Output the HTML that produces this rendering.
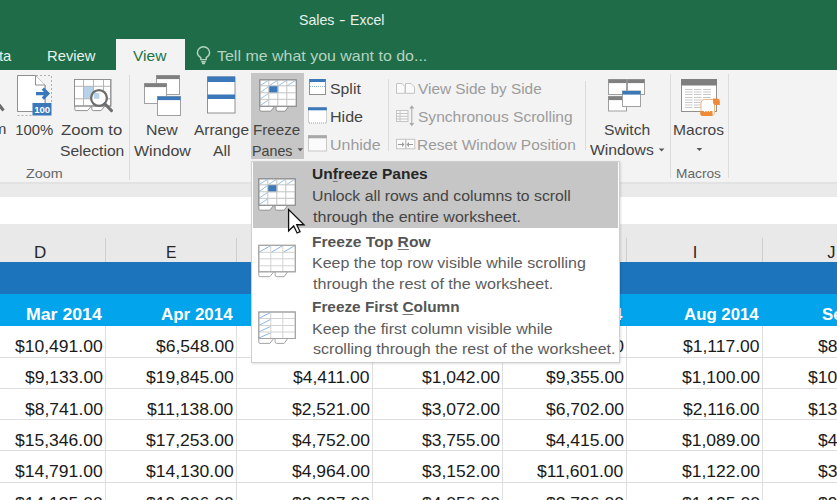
<!DOCTYPE html>
<html><head><meta charset="utf-8"><style>
html,body{margin:0;padding:0;overflow:hidden;}
body{width:837px;height:500px;overflow:hidden;position:relative;background:#fff;font-family:"Liberation Sans",sans-serif;}
.t{position:absolute;white-space:nowrap;line-height:1;}
.r{position:absolute;}
u{text-decoration:underline;text-decoration-thickness:1px;text-underline-offset:1.5px;text-decoration-color:#777;}
svg{position:absolute;overflow:visible;}
</style></head><body>
<div class="r" style="left:0px;top:0px;width:837px;height:70px;background:#1e6d48;"></div>
<div class="r" style="left:116px;top:39px;width:69px;height:31px;background:#f3f3f3;"></div>
<div class="r" style="left:0px;top:70px;width:837px;height:112px;background:#f3f3f3;"></div>
<div class="r" style="left:0px;top:182px;width:837px;height:14.5px;background:#eaeaea;"></div>
<div class="r" style="left:0px;top:182px;width:837px;height:1.5px;background:#e2e2e2;"></div>
<div class="r" style="left:0px;top:196.5px;width:837px;height:27.3px;background:#ffffff;"></div>
<div class="r" style="left:0px;top:223.8px;width:837px;height:38.4px;background:#e9e9e9;"></div>
<div class="r" style="left:0px;top:262px;width:837px;height:32px;background:#1c74bc;"></div>
<div class="r" style="left:0px;top:294px;width:837px;height:31.5px;background:#02a4ec;"></div>
<div class="r" style="left:0px;top:325.5px;width:837px;height:174.5px;background:#ffffff;"></div>
<div class="r" style="left:0px;top:356.5px;width:837px;height:1px;background:#dedede;"></div>
<div class="r" style="left:0px;top:387.8px;width:837px;height:1px;background:#dedede;"></div>
<div class="r" style="left:0px;top:419.1px;width:837px;height:1px;background:#dedede;"></div>
<div class="r" style="left:0px;top:450.4px;width:837px;height:1px;background:#dedede;"></div>
<div class="r" style="left:0px;top:481.7px;width:837px;height:1px;background:#dedede;"></div>
<div class="r" style="left:105px;top:325.5px;width:1px;height:174.5px;background:#dedede;"></div>
<div class="r" style="left:105px;top:238px;width:1px;height:24px;background:#d0d0d0;"></div>
<div class="r" style="left:236px;top:325.5px;width:1px;height:174.5px;background:#dedede;"></div>
<div class="r" style="left:236px;top:238px;width:1px;height:24px;background:#d0d0d0;"></div>
<div class="r" style="left:372px;top:325.5px;width:1px;height:174.5px;background:#dedede;"></div>
<div class="r" style="left:372px;top:238px;width:1px;height:24px;background:#d0d0d0;"></div>
<div class="r" style="left:502px;top:325.5px;width:1px;height:174.5px;background:#dedede;"></div>
<div class="r" style="left:502px;top:238px;width:1px;height:24px;background:#d0d0d0;"></div>
<div class="r" style="left:626px;top:325.5px;width:1px;height:174.5px;background:#dedede;"></div>
<div class="r" style="left:626px;top:238px;width:1px;height:24px;background:#d0d0d0;"></div>
<div class="r" style="left:762px;top:325.5px;width:1px;height:174.5px;background:#dedede;"></div>
<div class="r" style="left:762px;top:238px;width:1px;height:24px;background:#d0d0d0;"></div>
<div class="r" style="left:251px;top:73px;width:53px;height:86px;background:#c6c6c6;"></div>
<div class="r" style="left:129px;top:75px;width:1px;height:105px;background:#dcdcdc;"></div>
<div class="r" style="left:388px;top:79px;width:1px;height:72px;background:#dcdcdc;"></div>
<div class="r" style="left:584.5px;top:81px;width:1px;height:69px;background:#dcdcdc;"></div>
<div class="r" style="left:669.5px;top:74px;width:1px;height:104px;background:#dcdcdc;"></div>
<div class="r" style="left:728px;top:74px;width:1px;height:104px;background:#dcdcdc;"></div>
<svg width="837" height="500" style="left:0;top:0"><line x1="-3" y1="102" x2="3.5" y2="110.5" stroke="#6a6a6a" stroke-width="3"/><path d="M17.5,75.5 H35.5 L45,85 V103 M32.5,111.5 H17.5 V75.5" fill="#fff" stroke="#909090"/><path d="M17.5,75.5 H35.5 L45,85 V103 H32.5 V111.5 H17.5 Z" fill="#fff" stroke="none"/><path d="M17.5,75.5 H35.5 L45,85 V103 M32.5,111.5 H17.5 V75.5" fill="none" stroke="#909090"/><path d="M35.5,75.5 V85 H45" fill="#fff" stroke="#909090"/><path d="M36,75.5 H51.5 V103 M17.5,115.5 H32.5" fill="none" stroke="#b0b0b0" stroke-dasharray="2,2"/><path d="M36,93.6 H47.5 M42.8,88.6 L47.8,93.6 L42.8,98.6" fill="none" stroke="#3a78b9" stroke-width="3.2" stroke-linejoin="miter"/><rect x="32.5" y="103" width="19" height="12.5" fill="#3a78b9"/><text x="42.2" y="113.2" font-family="Liberation Sans" font-weight="bold" font-size="9.6" fill="#fff" text-anchor="middle">100</text><path d="M74.8,106 V109.3 q0,1.3 1.3,1.3 H87.5 L91.5,106 M91.8,106 V109 q0,1.6 1.6,1.6 H101 L105,106" fill="#fff" stroke="#909090"/><rect x="74.5" y="79.5" width="36.3" height="26.5" fill="#fff" stroke="#909090"/><rect x="83.5" y="86.3" width="10" height="12.5" fill="#b8d2ea"/><g stroke="#b4b4b4"><line x1="83.5" y1="79.5" x2="83.5" y2="106"/><line x1="93.5" y1="79.5" x2="93.5" y2="106"/><line x1="103.5" y1="79.5" x2="103.5" y2="106"/><line x1="74.5" y1="86.3" x2="110.8" y2="86.3"/><line x1="74.5" y1="98.8" x2="110.8" y2="98.8"/></g><rect x="74.5" y="79.5" width="36.3" height="26.5" fill="none" stroke="#909090"/><circle cx="99" cy="98" r="7.9" fill="#fff" stroke="#6e6e6e" stroke-width="2.3"/><rect x="93.8" y="93" width="5.5" height="5.8" fill="#b8d2ea"/><line x1="104.8" y1="103.8" x2="111.5" y2="110.6" stroke="#6e6e6e" stroke-width="3" stroke-linecap="round"/><rect x="156.5" y="75.5" width="23.0" height="19.0" fill="#fff" stroke="#a0a0a0" stroke-width="1"/><rect x="156.5" y="75.5" width="23.0" height="3.6" fill="#7f7f7f"/><rect x="144.5" y="83.5" width="22.0" height="20.0" fill="#fff" stroke="#a0a0a0" stroke-width="1"/><rect x="144.5" y="83.5" width="22.0" height="3.6" fill="#7f7f7f"/><rect x="157.5" y="96.5" width="23.0" height="19.0" fill="#fff" stroke="#a0a0a0" stroke-width="1"/><rect x="157.5" y="96.5" width="23.0" height="3.6" fill="#3a78b9"/><rect x="207.5" y="77" width="27.5" height="36" fill="#fff" stroke="#909090"/><rect x="207.5" y="76.5" width="27.5" height="5.5" fill="#3a78b9"/><rect x="207.5" y="94.5" width="27.5" height="4.5" fill="#3a78b9"/><g transform="translate(259.3,79.3)"><path d="M0.5,26.5 V30.7 q0,1.2 1.2,1.2 H11.5 L15.8,26.5" fill="#fff" stroke="#909090" stroke-width="1"/><path d="M16.8,26.5 V30.1 q0,1.8 1.8,1.8 H25.8 L29.8,26.5" fill="#fff" stroke="#909090" stroke-width="1"/><rect x="0.5" y="0.5" width="36.5" height="26.5" fill="#fff" stroke="#909090" stroke-width="1"/><rect x="9.5" y="6.5" width="9.5" height="7.3" fill="#3a78b9"/><g stroke="#9cc2e3" stroke-width="1"><line x1="0.5" y1="6.5" x2="9.5" y2="0.8"/><line x1="10.0" y1="6.5" x2="18.5" y2="0.8"/><line x1="19.0" y1="6.5" x2="27.5" y2="0.8"/><line x1="28.0" y1="6.5" x2="36.5" y2="0.8"/><line x1="0.5" y1="13.5" x2="9.5" y2="7.0"/><line x1="0.5" y1="20" x2="9.5" y2="14.0"/><line x1="0.5" y1="26.5" x2="9.5" y2="20.5"/></g><g stroke="#c4c4c4" stroke-width="1"><line x1="9.5" y1="0.5" x2="9.5" y2="26.5"/><line x1="18.5" y1="0.5" x2="18.5" y2="26.5"/><line x1="27.5" y1="0.5" x2="27.5" y2="26.5"/><line x1="0.5" y1="6.5" x2="36.5" y2="6.5"/><line x1="0.5" y1="13.5" x2="36.5" y2="13.5"/><line x1="0.5" y1="20" x2="36.5" y2="20"/></g><rect x="0.5" y="0.5" width="36.5" height="26.5" fill="none" stroke="#909090" stroke-width="1"/></g><rect x="309.5" y="79.5" width="16" height="15" fill="#fff" stroke="#909090"/><rect x="309.5" y="79" width="16" height="3" fill="#3a78b9"/><line x1="310" y1="86.5" x2="325" y2="86.5" stroke="#8db4d9" stroke-dasharray="1,1"/><rect x="308.5" y="107.5" width="18" height="15.5" fill="#fff" stroke="#a0a0a0" stroke-dasharray="1,1"/><rect x="308" y="107.3" width="18.8" height="3" fill="#3a78b9"/><rect x="308.5" y="135.5" width="18" height="15.5" fill="#fbfbfb" stroke="#c8c8c8"/><rect x="308" y="135.3" width="18.8" height="3" fill="#a9a9a9"/><g fill="#fafafa" stroke="#c4c4c4"><path d="M396.5,83.5 H402 L405,86.5 V93.3 H396.5 Z"/><path d="M405.5,83.5 H411 L414.5,87 V93.3 H405.5 Z"/></g><g fill="#fafafa" stroke="#c4c4c4"><rect x="396.5" y="110.5" width="11.5" height="11"/><path d="M396.5,113.5 H408 M396.5,116.3 H408 M396.5,119 H408 M400,110.5 V121.5" /></g><g stroke="#a8a8a8" fill="#a8a8a8"><line x1="411.8" y1="107" x2="411.8" y2="124.5"/><path d="M409.3,108.6 L411.8,105.3 L414.3,108.6 Z M409.3,123 L411.8,126.3 L414.3,123 Z" stroke="none"/></g><g fill="#fafafa" stroke="#c4c4c4"><rect x="396.5" y="139.3" width="9" height="9.5"/><rect x="406" y="139.3" width="8.8" height="9.5"/></g><g fill="#9a9a9a"><path d="M398,144 h4 v-2 l2.5,2.5 l-2.5,2.5 v-2 h-4z M413,144 h-4 v-2 l-2.5,2.5 l2.5,2.5 v-2 h4z"/></g><rect x="608.5" y="79.5" width="18.0" height="15.0" fill="#fff" stroke="#a0a0a0" stroke-width="1"/><rect x="608.5" y="79.5" width="18.0" height="3.6" fill="#7f7f7f"/><rect x="627.5" y="79.5" width="17.0" height="15.0" fill="#fff" stroke="#a0a0a0" stroke-width="1"/><rect x="627.5" y="79.5" width="17.0" height="3.6" fill="#7f7f7f"/><rect x="608.5" y="96.5" width="18.0" height="14.5" fill="#fff" stroke="#a0a0a0" stroke-width="1"/><rect x="608.5" y="96.5" width="18.0" height="3.6" fill="#7f7f7f"/><rect x="622.5" y="91" width="18.0" height="15.5" fill="#fff" stroke="#a0a0a0" stroke-width="1"/><rect x="622.5" y="91" width="18.0" height="3.6" fill="#3a78b9"/><rect x="681.5" y="79.5" width="35" height="32" fill="#fff" stroke="#909090"/><rect x="681" y="79" width="36" height="6.5" fill="#7f7f7f"/><g stroke="#c8c8c8" stroke-width="1"><line x1="685" y1="89.5" x2="692.5" y2="89.5"/><line x1="694" y1="89.5" x2="701.5" y2="89.5"/><line x1="703" y1="89.5" x2="711" y2="89.5"/><line x1="685" y1="92" x2="692.5" y2="92"/><line x1="694" y1="92" x2="701.5" y2="92"/><line x1="703" y1="92" x2="711" y2="92"/><line x1="685" y1="94.5" x2="692.5" y2="94.5"/><line x1="694" y1="94.5" x2="701.5" y2="94.5"/><line x1="703" y1="94.5" x2="711" y2="94.5"/><line x1="685" y1="97.5" x2="692.5" y2="97.5"/><line x1="694" y1="97.5" x2="701.5" y2="97.5"/><line x1="703" y1="97.5" x2="711" y2="97.5"/><line x1="685" y1="100" x2="692.5" y2="100"/><line x1="694" y1="100" x2="701.5" y2="100"/><line x1="703" y1="100" x2="711" y2="100"/><line x1="685" y1="102.5" x2="692.5" y2="102.5"/><line x1="694" y1="102.5" x2="701.5" y2="102.5"/><line x1="703" y1="102.5" x2="711" y2="102.5"/><line x1="685" y1="105" x2="692.5" y2="105"/><line x1="694" y1="105" x2="701.5" y2="105"/><line x1="703" y1="105" x2="711" y2="105"/><line x1="685" y1="107.5" x2="692.5" y2="107.5"/><line x1="694" y1="107.5" x2="701.5" y2="107.5"/><line x1="703" y1="107.5" x2="711" y2="107.5"/></g><path d="M704.5,99.5 H714.5 V112 q0,3.5 -3.5,3.5 H703 q-2,0 -2,-2 V103 q0,-3.5 3.5,-3.5 Z" fill="#fff" stroke="#f0b77e" stroke-width="1"/><path d="M713,98.6 H716.5 q3.3,0 3.3,3.3 V105 H716 q-3,0 -3,-3 Z" fill="#ee8a38"/><path d="M700.3,111 H712.5 V116 H702.8 q-2.5,0 -2.5,-2.5 Z" fill="#ee8a38"/><g fill="#fff"><rect x="704" y="110.8" width="1" height="1.2"/><rect x="706.5" y="110.8" width="1" height="1.2"/><rect x="709" y="110.8" width="1" height="1.2"/></g><path d="M297.5,148.2 H303.1 L300.3,151.2 Z" fill="#555"/><path d="M658.8000000000001,148.4 H664.4 L661.6,151.4 Z" fill="#555"/><path d="M696.6,147.9 H702.1999999999999 L699.4,150.9 Z" fill="#555"/></svg>
<svg width="837" height="500" style="left:0;top:0"><g fill="none" stroke="#b5d3c1" stroke-width="1.4"><path d="M200.8,59.6 v-2 q-3.4,-2 -3.4,-4.8 a6.1,6.1 0 0 1 12.2,0 q0,2.8 -3.4,4.8 v2 z"/><path d="M201.2,61.7 h4.6 M202,63.5 h3"/></g></svg>
<div class="t" style="left:299.16px;top:12.62px;font-size:14.80px;color:#e9f1ec;transform:scaleX(0.958);transform-origin:0 0;">Sales</div>
<div class="t" style="left:338.94px;top:12.62px;font-size:14.80px;color:#e9f1ec;transform:scaleX(1.324);transform-origin:0 0;">-</div>
<div class="t" style="left:350.25px;top:12.62px;font-size:14.80px;color:#e9f1ec;transform:scaleX(0.950);transform-origin:0 0;">Excel</div>
<div class="t" style="left:-20.45px;top:48.58px;font-size:14.50px;color:#e9f1ec;transform:scaleX(1.020);transform-origin:0 0;">Data</div>
<div class="t" style="left:47.29px;top:49.08px;font-size:14.50px;color:#e9f1ec;transform:scaleX(1.019);transform-origin:0 0;">Review</div>
<div class="t" style="left:132.84px;top:49.08px;font-size:14.50px;color:#217346;transform:scaleX(1.072);transform-origin:0 0;">View</div>
<div class="t" style="left:217.15px;top:49.08px;font-size:14.50px;color:#b5d3c1;transform:scaleX(1.101);transform-origin:0 0;">Tell me what you want to do...</div>
<div class="t" style="left:-33.87px;top:122.27px;font-size:14.50px;color:#444444;transform:scaleX(1.090);transform-origin:0 0;">Zoom</div>
<div class="t" style="left:15.27px;top:122.65px;font-size:14.88px;color:#444444;">100%</div>
<div class="t" style="left:61.48px;top:122.77px;font-size:14.50px;color:#444444;transform:scaleX(1.151);transform-origin:0 0;">Zoom to</div>
<div class="t" style="left:60.10px;top:143.58px;font-size:14.50px;color:#444444;transform:scaleX(1.078);transform-origin:0 0;">Selection</div>
<div class="t" style="left:25.56px;top:166.91px;font-size:13.40px;color:#666666;transform:scaleX(1.071);transform-origin:0 0;">Zoom</div>
<div class="t" style="left:146.20px;top:122.77px;font-size:14.50px;color:#444444;transform:scaleX(1.095);transform-origin:0 0;">New</div>
<div class="t" style="left:133.64px;top:143.58px;font-size:14.50px;color:#444444;transform:scaleX(1.104);transform-origin:0 0;">Window</div>
<div class="t" style="left:193.87px;top:122.77px;font-size:14.50px;color:#444444;transform:scaleX(1.066);transform-origin:0 0;">Arrange</div>
<div class="t" style="left:213.27px;top:143.58px;font-size:14.50px;color:#444444;transform:scaleX(1.091);transform-origin:0 0;">All</div>
<div class="t" style="left:253.46px;top:122.77px;font-size:14.50px;color:#444444;transform:scaleX(1.044);transform-origin:0 0;">Freeze</div>
<div class="t" style="left:251.63px;top:143.78px;font-size:14.50px;color:#444444;transform:scaleX(0.985);transform-origin:0 0;">Panes</div>
<div class="t" style="left:330.19px;top:82.17px;font-size:14.50px;color:#444444;transform:scaleX(1.092);transform-origin:0 0;">Split</div>
<div class="t" style="left:329.58px;top:110.38px;font-size:14.50px;color:#444444;transform:scaleX(1.107);transform-origin:0 0;">Hide</div>
<div class="t" style="left:329.67px;top:138.08px;font-size:14.50px;color:#9c9c9c;transform:scaleX(1.100);transform-origin:0 0;">Unhide</div>
<div class="t" style="left:418.44px;top:81.88px;font-size:14.50px;color:#9c9c9c;transform:scaleX(1.061);transform-origin:0 0;">View Side by Side</div>
<div class="t" style="left:417.80px;top:110.17px;font-size:14.50px;color:#9c9c9c;transform:scaleX(1.072);transform-origin:0 0;">Synchronous Scrolling</div>
<div class="t" style="left:417.23px;top:137.88px;font-size:14.50px;color:#9c9c9c;transform:scaleX(1.065);transform-origin:0 0;">Reset Window Position</div>
<div class="t" style="left:604.29px;top:122.77px;font-size:14.50px;color:#444444;transform:scaleX(1.082);transform-origin:0 0;">Switch</div>
<div class="t" style="left:590.14px;top:143.18px;font-size:14.50px;color:#444444;transform:scaleX(1.085);transform-origin:0 0;">Windows</div>
<div class="t" style="left:673.22px;top:122.77px;font-size:14.50px;color:#444444;transform:scaleX(1.074);transform-origin:0 0;">Macros</div>
<div class="t" style="left:676.18px;top:166.91px;font-size:13.40px;color:#666666;transform:scaleX(1.023);transform-origin:0 0;">Macros</div>
<div class="t" style="left:33.50px;top:244.06px;font-size:16.40px;color:#262626;transform:scaleX(1.039);transform-origin:0 0;">D</div>
<div class="t" style="left:165.62px;top:244.06px;font-size:16.40px;color:#262626;transform:scaleX(0.954);transform-origin:0 0;">E</div>
<div class="t" style="left:692.69px;top:244.06px;font-size:16.40px;color:#262626;">I</div>
<div class="t" style="left:827.15px;top:244.06px;font-size:16.40px;color:#262626;">J</div>
<div class="t" style="left:25.73px;top:306.60px;font-size:16.00px;color:#ffffff;font-weight:bold;transform:scaleX(1.107);transform-origin:0 0;">Mar 2014</div>
<div class="t" style="left:160.89px;top:306.60px;font-size:16.00px;color:#ffffff;font-weight:bold;transform:scaleX(1.059);transform-origin:0 0;">Apr 2014</div>
<div class="t" style="left:293.76px;top:306.60px;font-size:16.00px;color:#ffffff;font-weight:bold;transform:scaleX(1.050);transform-origin:0 0;">May 2014</div>
<div class="t" style="left:426.58px;top:306.60px;font-size:16.00px;color:#ffffff;font-weight:bold;transform:scaleX(1.050);transform-origin:0 0;">Jun 2014</div>
<div class="t" style="left:556.17px;top:306.60px;font-size:16.00px;color:#ffffff;font-weight:bold;transform:scaleX(1.050);transform-origin:0 0;">Jul 2014</div>
<div class="t" style="left:683.79px;top:306.60px;font-size:16.00px;color:#ffffff;font-weight:bold;transform:scaleX(1.050);transform-origin:0 0;">Aug 2014</div>
<div class="t" style="left:821.64px;top:306.60px;font-size:16.00px;color:#ffffff;font-weight:bold;transform:scaleX(1.050);transform-origin:0 0;">Sep 2014</div>
<div class="t" style="left:15.03px;top:338.05px;font-size:17.00px;color:#1a1a1a;transform:scaleX(1.030);transform-origin:0 0;">$10,491.00</div>
<div class="t" style="left:155.76px;top:338.05px;font-size:17.00px;color:#1a1a1a;transform:scaleX(1.030);transform-origin:0 0;">$6,548.00</div>
<div class="t" style="left:291.76px;top:338.05px;font-size:17.00px;color:#1a1a1a;transform:scaleX(1.030);transform-origin:0 0;">$3,214.00</div>
<div class="t" style="left:421.76px;top:338.05px;font-size:17.00px;color:#1a1a1a;transform:scaleX(1.030);transform-origin:0 0;">$2,198.00</div>
<div class="t" style="left:545.76px;top:338.05px;font-size:17.00px;color:#1a1a1a;transform:scaleX(1.030);transform-origin:0 0;">$4,310.00</div>
<div class="t" style="left:683.08px;top:338.05px;font-size:17.00px;color:#1a1a1a;transform:scaleX(1.030);transform-origin:0 0;">$1,117.00</div>
<div class="t" style="left:817.76px;top:338.05px;font-size:17.00px;color:#1a1a1a;transform:scaleX(1.030);transform-origin:0 0;">$8,412.00</div>
<div class="t" style="left:24.76px;top:369.35px;font-size:17.00px;color:#1a1a1a;transform:scaleX(1.030);transform-origin:0 0;">$9,133.00</div>
<div class="t" style="left:146.03px;top:369.35px;font-size:17.00px;color:#1a1a1a;transform:scaleX(1.030);transform-origin:0 0;">$19,845.00</div>
<div class="t" style="left:293.08px;top:369.35px;font-size:17.00px;color:#1a1a1a;transform:scaleX(1.030);transform-origin:0 0;">$4,411.00</div>
<div class="t" style="left:421.76px;top:369.35px;font-size:17.00px;color:#1a1a1a;transform:scaleX(1.030);transform-origin:0 0;">$1,042.00</div>
<div class="t" style="left:545.76px;top:369.35px;font-size:17.00px;color:#1a1a1a;transform:scaleX(1.030);transform-origin:0 0;">$9,355.00</div>
<div class="t" style="left:681.76px;top:369.35px;font-size:17.00px;color:#1a1a1a;transform:scaleX(1.030);transform-origin:0 0;">$1,100.00</div>
<div class="t" style="left:808.03px;top:369.35px;font-size:17.00px;color:#1a1a1a;transform:scaleX(1.030);transform-origin:0 0;">$10,214.00</div>
<div class="t" style="left:24.76px;top:400.65px;font-size:17.00px;color:#1a1a1a;transform:scaleX(1.030);transform-origin:0 0;">$8,741.00</div>
<div class="t" style="left:147.32px;top:400.65px;font-size:17.00px;color:#1a1a1a;transform:scaleX(1.030);transform-origin:0 0;">$11,138.00</div>
<div class="t" style="left:291.76px;top:400.65px;font-size:17.00px;color:#1a1a1a;transform:scaleX(1.030);transform-origin:0 0;">$2,521.00</div>
<div class="t" style="left:421.76px;top:400.65px;font-size:17.00px;color:#1a1a1a;transform:scaleX(1.030);transform-origin:0 0;">$3,072.00</div>
<div class="t" style="left:545.76px;top:400.65px;font-size:17.00px;color:#1a1a1a;transform:scaleX(1.030);transform-origin:0 0;">$6,702.00</div>
<div class="t" style="left:683.08px;top:400.65px;font-size:17.00px;color:#1a1a1a;transform:scaleX(1.030);transform-origin:0 0;">$2,116.00</div>
<div class="t" style="left:808.03px;top:400.65px;font-size:17.00px;color:#1a1a1a;transform:scaleX(1.030);transform-origin:0 0;">$13,402.00</div>
<div class="t" style="left:15.03px;top:431.95px;font-size:17.00px;color:#1a1a1a;transform:scaleX(1.030);transform-origin:0 0;">$15,346.00</div>
<div class="t" style="left:146.03px;top:431.95px;font-size:17.00px;color:#1a1a1a;transform:scaleX(1.030);transform-origin:0 0;">$17,253.00</div>
<div class="t" style="left:291.76px;top:431.95px;font-size:17.00px;color:#1a1a1a;transform:scaleX(1.030);transform-origin:0 0;">$4,752.00</div>
<div class="t" style="left:421.76px;top:431.95px;font-size:17.00px;color:#1a1a1a;transform:scaleX(1.030);transform-origin:0 0;">$3,755.00</div>
<div class="t" style="left:545.76px;top:431.95px;font-size:17.00px;color:#1a1a1a;transform:scaleX(1.030);transform-origin:0 0;">$4,415.00</div>
<div class="t" style="left:681.76px;top:431.95px;font-size:17.00px;color:#1a1a1a;transform:scaleX(1.030);transform-origin:0 0;">$1,089.00</div>
<div class="t" style="left:817.76px;top:431.95px;font-size:17.00px;color:#1a1a1a;transform:scaleX(1.030);transform-origin:0 0;">$4,512.00</div>
<div class="t" style="left:15.03px;top:463.25px;font-size:17.00px;color:#1a1a1a;transform:scaleX(1.030);transform-origin:0 0;">$14,791.00</div>
<div class="t" style="left:146.03px;top:463.25px;font-size:17.00px;color:#1a1a1a;transform:scaleX(1.030);transform-origin:0 0;">$14,130.00</div>
<div class="t" style="left:291.76px;top:463.25px;font-size:17.00px;color:#1a1a1a;transform:scaleX(1.030);transform-origin:0 0;">$4,964.00</div>
<div class="t" style="left:421.76px;top:463.25px;font-size:17.00px;color:#1a1a1a;transform:scaleX(1.030);transform-origin:0 0;">$3,152.00</div>
<div class="t" style="left:537.32px;top:463.25px;font-size:17.00px;color:#1a1a1a;transform:scaleX(1.030);transform-origin:0 0;">$11,601.00</div>
<div class="t" style="left:681.76px;top:463.25px;font-size:17.00px;color:#1a1a1a;transform:scaleX(1.030);transform-origin:0 0;">$1,122.00</div>
<div class="t" style="left:817.76px;top:463.25px;font-size:17.00px;color:#1a1a1a;transform:scaleX(1.030);transform-origin:0 0;">$3,614.00</div>
<div class="t" style="left:15.03px;top:494.55px;font-size:17.00px;color:#1a1a1a;transform:scaleX(1.030);transform-origin:0 0;">$14,135.00</div>
<div class="t" style="left:146.03px;top:494.55px;font-size:17.00px;color:#1a1a1a;transform:scaleX(1.030);transform-origin:0 0;">$19,306.00</div>
<div class="t" style="left:291.76px;top:494.55px;font-size:17.00px;color:#1a1a1a;transform:scaleX(1.030);transform-origin:0 0;">$2,327.00</div>
<div class="t" style="left:421.76px;top:494.55px;font-size:17.00px;color:#1a1a1a;transform:scaleX(1.030);transform-origin:0 0;">$4,056.00</div>
<div class="t" style="left:545.76px;top:494.55px;font-size:17.00px;color:#1a1a1a;transform:scaleX(1.030);transform-origin:0 0;">$2,726.00</div>
<div class="t" style="left:681.76px;top:494.55px;font-size:17.00px;color:#1a1a1a;transform:scaleX(1.030);transform-origin:0 0;">$1,135.00</div>
<div class="t" style="left:817.76px;top:494.55px;font-size:17.00px;color:#1a1a1a;transform:scaleX(1.030);transform-origin:0 0;">$9,120.00</div>
<div class="r" style="left:250.8px;top:160.5px;width:369.7px;height:202.2px;background:#ffffff;border:1px solid #cfcfcf;box-sizing:border-box;box-shadow:1px 1px 2px rgba(0,0,0,0.12);"></div>
<div class="r" style="left:252.5px;top:161.5px;width:365.5px;height:66px;background:#c6c6c6;"></div>
<svg width="837" height="500" style="left:0;top:0"><g transform="translate(258.3,178.3)"><path d="M0.5,26.5 V30.7 q0,1.2 1.2,1.2 H11.5 L15.8,26.5" fill="#fff" stroke="#909090" stroke-width="1"/><path d="M16.8,26.5 V30.1 q0,1.8 1.8,1.8 H25.8 L29.8,26.5" fill="#fff" stroke="#909090" stroke-width="1"/><rect x="0.5" y="0.5" width="36.5" height="26.5" fill="#fff" stroke="#909090" stroke-width="1"/><rect x="9.5" y="6.5" width="9.5" height="7.3" fill="#3a78b9"/><g stroke="#9cc2e3" stroke-width="1"><line x1="0.5" y1="6.5" x2="9.5" y2="0.8"/><line x1="10.0" y1="6.5" x2="18.5" y2="0.8"/><line x1="19.0" y1="6.5" x2="27.5" y2="0.8"/><line x1="28.0" y1="6.5" x2="36.5" y2="0.8"/><line x1="0.5" y1="13.5" x2="9.5" y2="7.0"/><line x1="0.5" y1="20" x2="9.5" y2="14.0"/><line x1="0.5" y1="26.5" x2="9.5" y2="20.5"/></g><g stroke="#c4c4c4" stroke-width="1"><line x1="9.5" y1="0.5" x2="9.5" y2="26.5"/><line x1="18.5" y1="0.5" x2="18.5" y2="26.5"/><line x1="27.5" y1="0.5" x2="27.5" y2="26.5"/><line x1="0.5" y1="6.5" x2="36.5" y2="6.5"/><line x1="0.5" y1="13.5" x2="36.5" y2="13.5"/><line x1="0.5" y1="20" x2="36.5" y2="20"/></g><rect x="0.5" y="0.5" width="36.5" height="26.5" fill="none" stroke="#909090" stroke-width="1"/></g><g transform="translate(258.3,244.8)"><path d="M0.5,26.5 V30.7 q0,1.2 1.2,1.2 H11.5 L15.8,26.5" fill="#fff" stroke="#a4a4a4" stroke-width="1"/><path d="M16.8,26.5 V30.1 q0,1.8 1.8,1.8 H25.8 L29.8,26.5" fill="#fff" stroke="#a4a4a4" stroke-width="1"/><rect x="0.5" y="0.5" width="36.5" height="26.5" fill="#fff" stroke="#a4a4a4" stroke-width="1"/><g stroke="#8fb6dc" stroke-width="1"><line x1="0.5" y1="7.5" x2="12.5" y2="0.8"/><line x1="13.0" y1="7.5" x2="24.5" y2="0.8"/><line x1="25.0" y1="7.5" x2="36.5" y2="0.8"/></g><g stroke="#d2d2d2" stroke-width="1"><line x1="12.5" y1="0.5" x2="12.5" y2="26.5"/><line x1="24.5" y1="0.5" x2="24.5" y2="26.5"/><line x1="0.5" y1="7.5" x2="36.5" y2="7.5"/><line x1="0.5" y1="14" x2="36.5" y2="14"/><line x1="0.5" y1="21" x2="36.5" y2="21"/></g><rect x="0.5" y="0.5" width="36.5" height="26.5" fill="none" stroke="#a4a4a4" stroke-width="1"/></g><g transform="translate(258.3,311.5)"><path d="M0.5,26.5 V30.7 q0,1.2 1.2,1.2 H11.5 L15.8,26.5" fill="#fff" stroke="#a4a4a4" stroke-width="1"/><path d="M16.8,26.5 V30.1 q0,1.8 1.8,1.8 H25.8 L29.8,26.5" fill="#fff" stroke="#a4a4a4" stroke-width="1"/><rect x="0.5" y="0.5" width="36.5" height="26.5" fill="#fff" stroke="#a4a4a4" stroke-width="1"/><g stroke="#8fb6dc" stroke-width="1"><line x1="0.5" y1="7" x2="12.5" y2="0.8"/><line x1="0.5" y1="14" x2="12.5" y2="7.8"/><line x1="0.5" y1="20.5" x2="12.5" y2="14.8"/><line x1="0.5" y1="26.5" x2="12.5" y2="21.3"/></g><g stroke="#d2d2d2" stroke-width="1"><line x1="12.5" y1="0.5" x2="12.5" y2="26.5"/><line x1="24.5" y1="0.5" x2="24.5" y2="26.5"/><line x1="0.5" y1="7" x2="36.5" y2="7"/><line x1="0.5" y1="14" x2="36.5" y2="14"/><line x1="0.5" y1="20.5" x2="36.5" y2="20.5"/></g><rect x="0.5" y="0.5" width="36.5" height="26.5" fill="none" stroke="#a4a4a4" stroke-width="1"/></g></svg>
<div class="t" style="left:312.07px;top:167.15px;font-size:14.30px;color:#262626;font-weight:bold;transform:scaleX(1.086);transform-origin:0 0;">Un<u>f</u>reeze Panes</div>
<div class="t" style="left:311.78px;top:189.00px;font-size:14.70px;color:#444444;transform:scaleX(1.075);transform-origin:0 0;">Unlock all rows and columns to scroll</div>
<div class="t" style="left:312.76px;top:210.00px;font-size:14.70px;color:#444444;transform:scaleX(1.093);transform-origin:0 0;">through the entire worksheet.</div>
<div class="t" style="left:311.97px;top:234.65px;font-size:14.30px;color:#555555;font-weight:bold;transform:scaleX(1.092);transform-origin:0 0;">Freeze Top <u>R</u>ow</div>
<div class="t" style="left:311.69px;top:256.31px;font-size:14.70px;color:#5c5c5c;transform:scaleX(1.089);transform-origin:0 0;">Keep the top row visible while scrolling</div>
<div class="t" style="left:312.76px;top:276.81px;font-size:14.70px;color:#5c5c5c;transform:scaleX(1.098);transform-origin:0 0;">through the rest of the worksheet.</div>
<div class="t" style="left:311.99px;top:300.45px;font-size:14.30px;color:#555555;font-weight:bold;transform:scaleX(1.074);transform-origin:0 0;">Freeze First <u>C</u>olumn</div>
<div class="t" style="left:311.68px;top:322.20px;font-size:14.70px;color:#5c5c5c;transform:scaleX(1.092);transform-origin:0 0;">Keep the first column visible while</div>
<div class="t" style="left:312.57px;top:342.31px;font-size:14.70px;color:#5c5c5c;transform:scaleX(1.093);transform-origin:0 0;">scrolling through the rest of the worksheet.</div>
<svg width="837" height="500" style="left:0;top:0"><polygon points="288.60,209.60 288.60,230.88 293.65,225.96 297.11,233.01 300.04,231.68 296.71,224.76 304.03,224.76" fill="#fff" stroke="#111" stroke-width="1.3" stroke-linejoin="miter"/></svg>

</body></html>
